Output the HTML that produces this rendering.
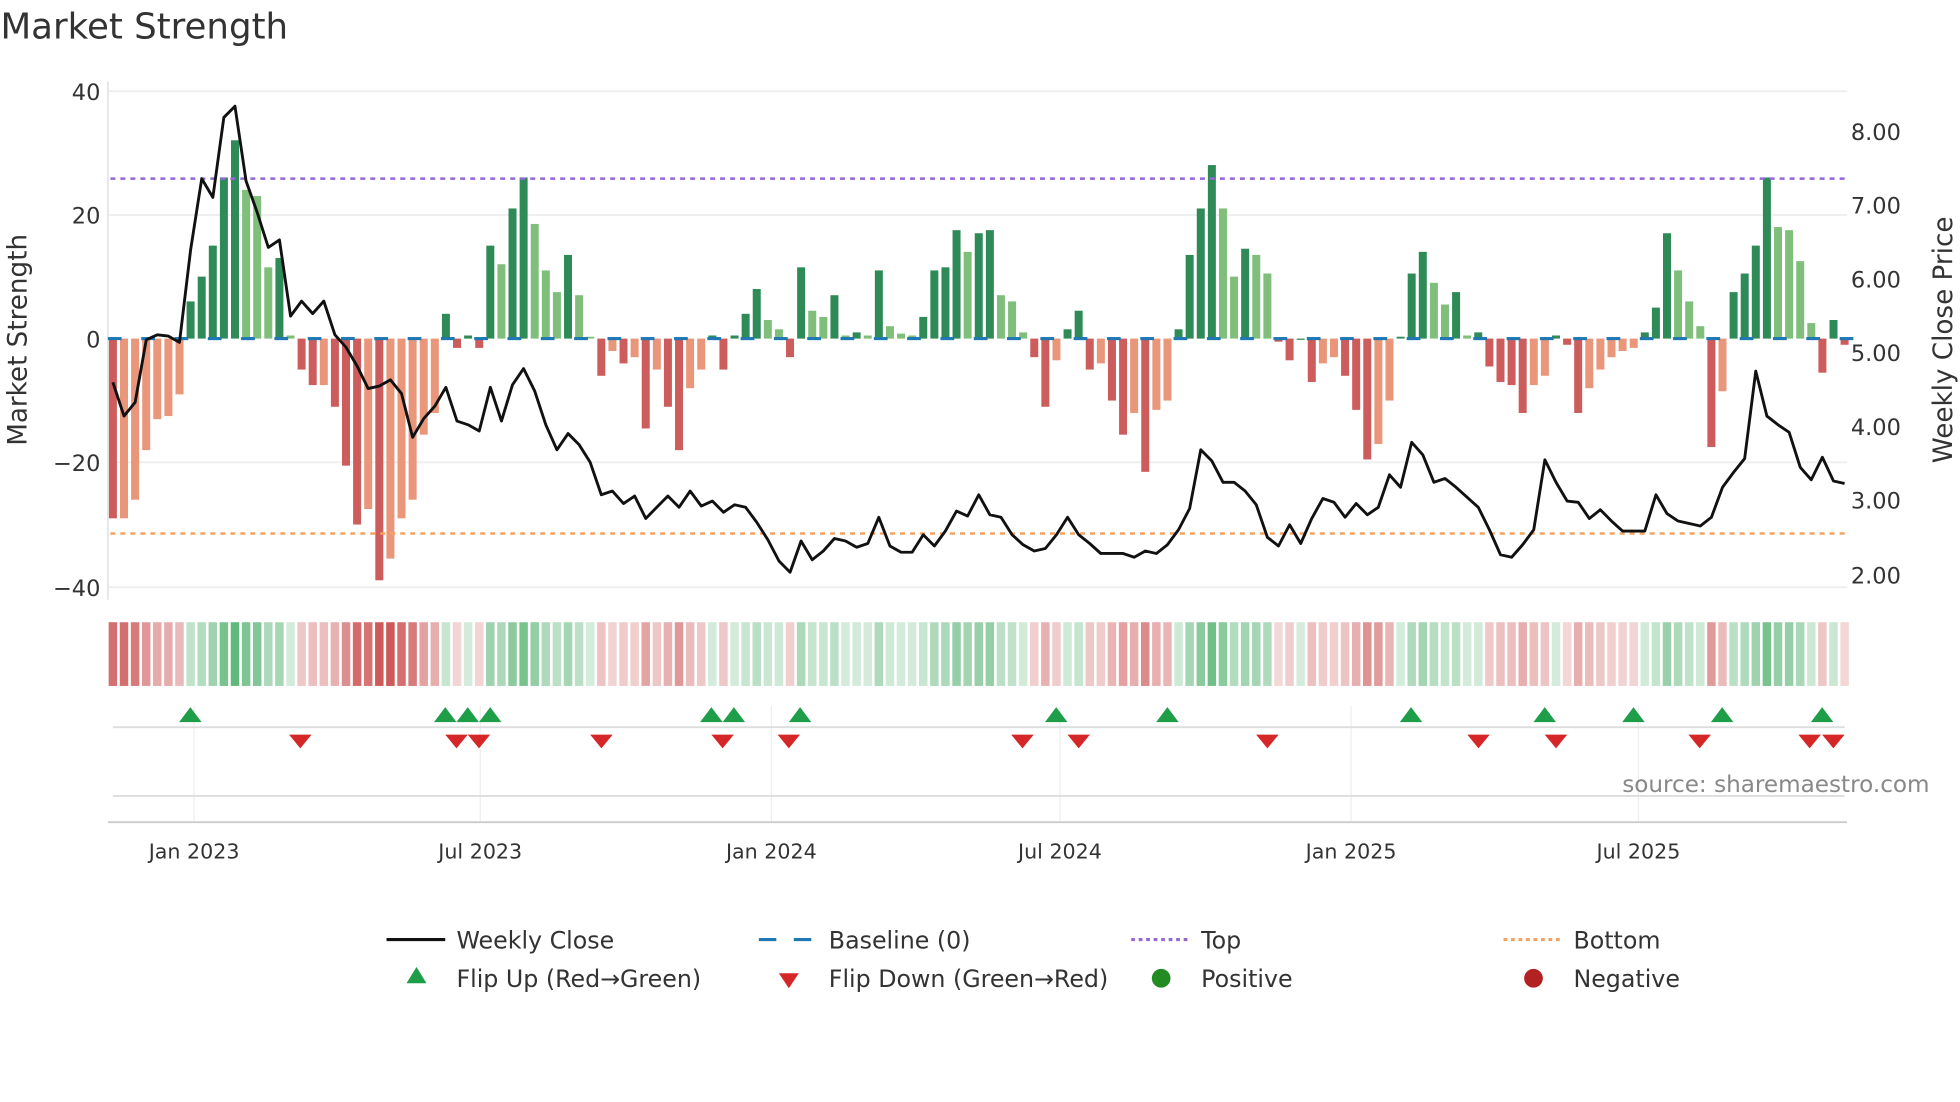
<!DOCTYPE html>
<html><head><meta charset="utf-8"><style>
html,body{margin:0;padding:0;background:#fff;}
svg{display:block;font-family:"DejaVu Sans","Liberation Sans",sans-serif;}
</style></head><body>
<svg id="s" width="1960" height="1102" viewBox="0 0 1568 882" xmlns="http://www.w3.org/2000/svg">
<rect width="1568" height="882" fill="#fff"/>
<text x="0" y="31" font-size="28.5" fill="#333">Market Strength</text>
<g stroke="#eeeeee" stroke-width="1.5">
<line x1="86" y1="73" x2="1478" y2="73"/><line x1="86" y1="172" x2="1478" y2="172"/>
<line x1="86" y1="370" x2="1478" y2="370"/><line x1="86" y1="470" x2="1478" y2="470"/>
</g>
<g stroke="#eeeeee" stroke-width="1">
<line x1="155" y1="565" x2="155" y2="658"/><line x1="384" y1="565" x2="384" y2="658"/>
<line x1="617" y1="565" x2="617" y2="658"/><line x1="848" y1="565" x2="848" y2="658"/>
<line x1="1081" y1="565" x2="1081" y2="658"/><line x1="1311" y1="565" x2="1311" y2="658"/>
</g>
<line x1="86" y1="65" x2="86" y2="480" stroke="#e6e6e6" stroke-width="1.5"/>
<g font-size="18" fill="#333" text-anchor="end">
<text x="80" y="80">40</text><text x="80" y="179">20</text><text x="80" y="278">0</text>
<text x="80" y="377">−20</text><text x="80" y="477">−40</text>
</g>
<g font-size="18" fill="#333">
<text x="1481" y="112">8.00</text><text x="1481" y="171">7.00</text><text x="1481" y="230">6.00</text>
<text x="1481" y="289">5.00</text><text x="1481" y="348">4.00</text><text x="1481" y="407">3.00</text>
<text x="1481" y="467">2.00</text>
</g>
<text transform="translate(21,272) rotate(-90)" font-size="21" fill="#333" text-anchor="middle">Market Strength</text>
<text transform="translate(1562,272) rotate(-90)" font-size="21" fill="#333" text-anchor="middle">Weekly Close Price</text>
<g id="bars"></g>
<g id="base"></g>
<line x1="88" y1="143" x2="1476" y2="143" stroke="#9467d6" stroke-width="2" stroke-dasharray="4,4"/>
<line x1="88" y1="427" x2="1476" y2="427" stroke="#f4a261" stroke-width="2" stroke-dasharray="4,4"/>
<polyline id="price" fill="none" stroke="#111" stroke-width="2.3" stroke-linejoin="round"/>
<g id="heat"></g>
<line x1="90" y1="582" x2="1476" y2="582" stroke="#ddd" stroke-width="1.5"/>
<line x1="90" y1="637" x2="1476" y2="637" stroke="#ddd" stroke-width="1.5"/>
<line x1="86" y1="658" x2="1478" y2="658" stroke="#ccc" stroke-width="1.5"/>
<g id="tri"></g>
<text x="1544" y="634" font-size="18.5" fill="#888" text-anchor="end">source: sharemaestro.com</text>
<g font-size="16.5" fill="#333" text-anchor="middle">
<text x="155" y="687">Jan 2023</text><text x="384" y="687">Jul 2023</text><text x="617" y="687">Jan 2024</text>
<text x="848" y="687">Jul 2024</text><text x="1081" y="687">Jan 2025</text><text x="1311" y="687">Jul 2025</text>
</g>
<g font-size="19" fill="#333">
<line x1="309" y1="752" x2="356" y2="752" stroke="#111" stroke-width="2.5"/>
<text x="365" y="759">Weekly Close</text>
<line x1="607" y1="752" x2="621" y2="752" stroke="#1f77b4" stroke-width="2.5"/>
<line x1="635" y1="752" x2="649" y2="752" stroke="#1f77b4" stroke-width="2.5"/>
<text x="663" y="759">Baseline (0)</text>
<line x1="905" y1="752" x2="950" y2="752" stroke="#9467d6" stroke-width="2.5" stroke-dasharray="3,3"/>
<text x="961" y="759">Top</text>
<line x1="1203" y1="752" x2="1248" y2="752" stroke="#f4a261" stroke-width="2.5" stroke-dasharray="3,3"/>
<text x="1259" y="759">Bottom</text>
<polygon points="333,774 325,787 341,787" fill="#1e9e48"/>
<text x="365" y="790">Flip Up (Red→Green)</text>
<polygon points="623,779 639,779 631,791" fill="#d62728"/>
<text x="663" y="790">Flip Down (Green→Red)</text>
<circle cx="929" cy="783" r="7.5" fill="#228b22"/>
<text x="961" y="790">Positive</text>
<circle cx="1227" cy="783" r="7.5" fill="#b22222"/>
<text x="1259" y="790">Negative</text>
</g>
</svg>
<script>
var V=[-29,-29,-26,-18,-13,-12.5,-9,6,10,15,26,32,24,23,11.5,13,0.5,-5,-7.5,-7.5,-11,-20.5,-30,-27.5,-39,-35.5,-29,-26,-15.5,-12,4,-1.5,0.5,-1.5,15,12,21,26,18.5,11,7.5,13.5,7,0.3,-6,-2,-4,-3,-14.5,-5,-11,-18,-8,-5,0.5,-5,0.5,4,8,3,1.5,-3,11.5,4.5,3.5,7,0.5,1,0.5,11,2,0.8,0.5,3.5,11,11.5,17.5,14,17,17.5,7,6,1,-3,-11,-3.5,1.5,4.5,-5,-4,-10,-15.5,-12,-21.5,-11.5,-10,1.5,13.5,21,28,21,10,14.5,13.5,10.5,-0.5,-3.5,0,-7,-4,-3,-6,-11.5,-19.5,-17,-10,0.3,10.5,14,9,5.5,7.5,0.5,1,-4.5,-7,-7.5,-12,-7.5,-6,0.5,-1,-12,-8,-5,-3,-2,-1.5,1,5,17,11,6,2,-17.5,-8.5,7.5,10.5,15,26,18,17.5,12.5,2.5,-5.5,3,-1];
var P=[306,333,322,272,268,269,274,200,143,158,94,85,145,170,198,192,253,241,251,241,268,278,293,311,309,304,315,350,335,325,310,337,340,345,310,337,308,295,313,340,360,347,356,370,396,393,403,397,415,406,397,406,393,405,401,410,404,406,418,432,449,458,433,448,441,431,433,438,435,414,437,442,442,428,437,425,409,413,396,412,414,428,436,441,439,428,414,428,435,443,443,443,446,441,443,436,424,407,360,369,386,386,393,404,430,437,420,435,415,399,402,414,403,412,406,380,390,354,364,386,383,390,398,406,424,444,446,436,424,368,386,401,402,415,408,417,425,425,425,396,411,417,419,421,414,390,378,367,297,333,340,346,374,384,366,385,387];
var n=V.length,x0=90,x1=1476,st=(x1-x0)/(n-1),ns="http://www.w3.org/2000/svg";
function el(g,t,a){var e=document.createElementNS(ns,t);for(var k in a)e.setAttribute(k,a[k]);document.getElementById(g).appendChild(e);}
for(var i=0;i<n;i++){var v=V[i],p=i?V[i-1]:0,x=x0+i*st,c;
 if(v>=0)c=v>=p?"#2e8b57":"#7fbf7b";else c=v<p?"#cd5c5c":"#e9967a";
 var h=Math.abs(v)*4.96;el("bars","rect",{x:x-3.2,y:v>=0?271-h:271,width:6.4,height:Math.max(h,1),fill:c});
 if(i%3==0)el("base","line",{x1:x-4,y1:271,x2:x+7,y2:271,stroke:"#1f77b4","stroke-width":2.5});
 var a=Math.min(Math.abs(v)/35,1);var col=v>=0?"rgba(46,160,80,"+(0.2+0.6*a)+")":"rgba(200,70,70,"+(0.2+0.7*a)+")";
 el("heat","rect",{x:x-3.4,y:498,width:6.8,height:51,fill:col});}
var pts=[];for(var i=0;i<P.length;i++)pts.push((x0+i*(x1-x0)/(P.length-1)).toFixed(1)+","+P[i]);
document.getElementById("price").setAttribute("points",pts.join(" "));
[152,356,374,392,569,587,640,845,934,1129,1236,1307,1378,1458].forEach(function(x){el("tri","polygon",{points:(x)+",566 "+(x-9)+",578 "+(x+9)+",578",fill:"#1e9e48"});});
[240,365,383,481,578,631,818,863,1014,1183,1245,1360,1448,1467].forEach(function(x){el("tri","polygon",{points:(x-9)+",588 "+(x+9)+",588 "+x+",599",fill:"#d62728"});});
</script>
</body></html>
